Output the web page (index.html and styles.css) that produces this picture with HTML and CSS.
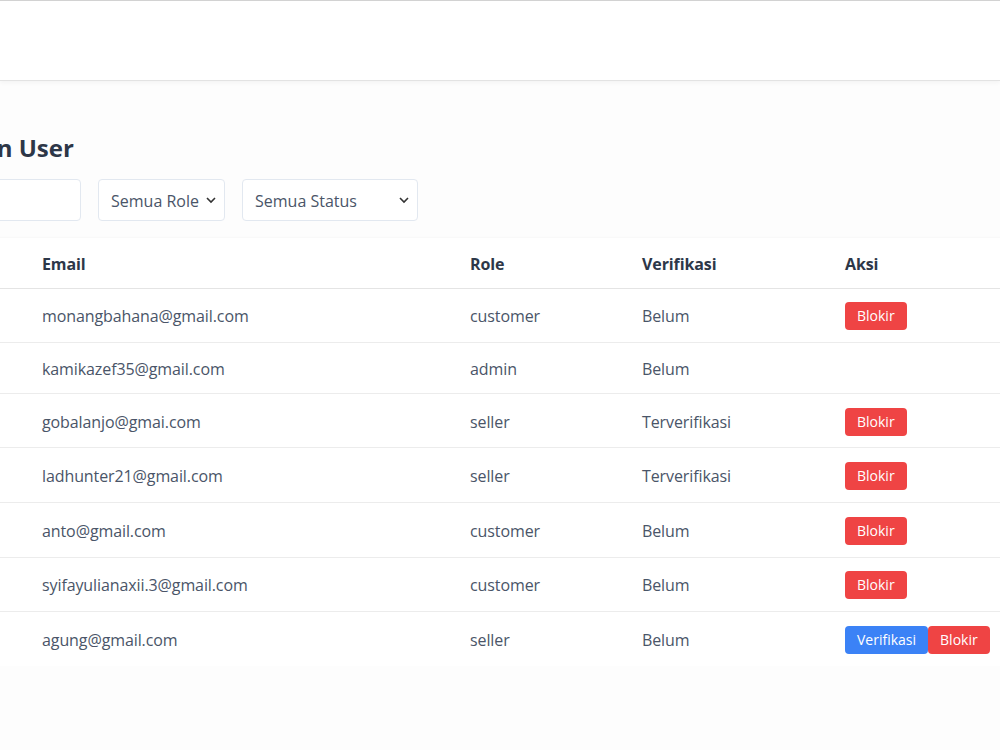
FILE: index.html
```html
<!DOCTYPE html>
<html lang="id">
<head>
    <meta charset="UTF-8">
    <meta name="viewport" content="width=device-width, initial-scale=1.0">
    <title>Manajemen User</title>
    <link rel="stylesheet" href="styles.css">
</head>
<body>
    <header class="topbar"></header>

    <main class="content">
        <h1 class="title">Manajemen User</h1>

        <div class="filters">
            <input type="text" class="search" placeholder="">
            <select class="select select-role">
                <option>Semua Role</option>
                <option>customer</option>
                <option>seller</option>
                <option>admin</option>
            </select>
            <select class="select select-status">
                <option>Semua Status</option>
                <option>Belum</option>
                <option>Terverifikasi</option>
            </select>
        </div>

        <div class="card">
            <table class="users">
                <colgroup>
                    <col class="c-name">
                    <col class="c-email">
                    <col class="c-role">
                    <col class="c-verif">
                    <col class="c-aksi">
                </colgroup>
                <thead>
                    <tr>
                        <th>Nama</th>
                        <th>Email</th>
                        <th>Role</th>
                        <th>Verifikasi</th>
                        <th>Aksi</th>
                    </tr>
                </thead>
                <tbody>
                    <tr>
                        <td>Monang</td>
                        <td>monangbahana@gmail.com</td>
                        <td>customer</td>
                        <td>Belum</td>
                        <td><button class="btn btn-red">Blokir</button></td>
                    </tr>
                    <tr>
                        <td>Admin</td>
                        <td>kamikazef35@gmail.com</td>
                        <td>admin</td>
                        <td>Belum</td>
                        <td></td>
                    </tr>
                    <tr>
                        <td>Goba</td>
                        <td>gobalanjo@gmai.com</td>
                        <td>seller</td>
                        <td>Terverifikasi</td>
                        <td><button class="btn btn-red">Blokir</button></td>
                    </tr>
                    <tr>
                        <td>Ladh</td>
                        <td>ladhunter21@gmail.com</td>
                        <td>seller</td>
                        <td>Terverifikasi</td>
                        <td><button class="btn btn-red">Blokir</button></td>
                    </tr>
                    <tr>
                        <td>Anto</td>
                        <td>anto@gmail.com</td>
                        <td>customer</td>
                        <td>Belum</td>
                        <td><button class="btn btn-red">Blokir</button></td>
                    </tr>
                    <tr>
                        <td>Syifa</td>
                        <td>syifayulianaxii.3@gmail.com</td>
                        <td>customer</td>
                        <td>Belum</td>
                        <td><button class="btn btn-red">Blokir</button></td>
                    </tr>
                    <tr>
                        <td>Agung</td>
                        <td>agung@gmail.com</td>
                        <td>seller</td>
                        <td>Belum</td>
                        <td><button class="btn btn-blue">Verifikasi</button><button class="btn btn-red">Blokir</button></td>
                    </tr>
                </tbody>
            </table>
        </div>
    </main>
</body>
</html>
```

FILE: styles.css
```css
html {
    font-family: "Open Sans", "Noto Sans", sans-serif;
}
body {
    margin: 0;
    background-color: #fdfdfd;
    color: #4a5568;
    overflow: hidden;
}
.topbar {
    height: 79px;
    background-color: #fff;
    border-top: 1px solid #d2d2d2;
    border-bottom: 1px solid #e3e3e3;
    box-shadow: 0 2px 4px rgba(0, 0, 0, 0.04);
}
.content {
    margin-left: -130px;
    width: 1170px;
    padding-top: 51px;
}
.title {
    margin: 0 0 15px;
    font-size: 24px;
    line-height: 32px;
    font-weight: 700;
    color: #2d3748;
}
.filters {
    display: flex;
    gap: 17px;
    margin-bottom: 17px;
}
.search,
.select {
    box-sizing: border-box;
    height: 42px;
    border: 1px solid #e2e8f0;
    border-radius: 4px;
    background-color: #fff;
    font-family: inherit;
    font-size: 16px;
    color: #4a5568;
}
.search {
    width: 211px;
    padding: 0 12px;
}
.select {
    appearance: none;
    padding: 1px 22px 0 12px;
    background-image: url("data:image/svg+xml;utf8,<svg xmlns='http://www.w3.org/2000/svg' width='12' height='8' viewBox='0 0 12 8'><path d='M2 2l4 4 4-4' fill='none' stroke='%23333' stroke-width='1.6'/></svg>");
    background-repeat: no-repeat;
    background-position: right 7px center;
}
.select-role {
    width: 127px;
}
.select-status {
    width: 176px;
}
.card {
    background-color: #fff;
    box-shadow: 0 1px 3px rgba(0, 0, 0, 0.1);
}
.users {
    width: 100%;
    table-layout: fixed;
    border-collapse: collapse;
}
.c-name { width: 148px; }
.c-email { width: 428px; }
.c-role { width: 172px; }
.c-verif { width: 203px; }
.users th,
.users td {
    padding: 13.8px 24px 11.8px;
    text-align: left;
    font-size: 16px;
    line-height: 24px;
    letter-spacing: -0.1px;
    white-space: nowrap;
}
.users th {
    font-weight: 700;
    color: #2d3748;
    border-bottom: 1px solid #e4e4e4;
}
.users td {
    border-bottom: 1px solid #ececec;
}
.users tbody tr:last-child td {
    border-bottom: none;
}
.btn {
    display: inline-block;
    vertical-align: middle;
    padding: 4px 12px;
    border: none;
    border-radius: 4px;
    font-family: inherit;
    font-size: 14px;
    line-height: 20px;
    color: #fff;
    cursor: pointer;
}
.btn-red {
    background-color: #ef4444;
}
.btn-blue {
    background-color: #3b82f6;
}
```
